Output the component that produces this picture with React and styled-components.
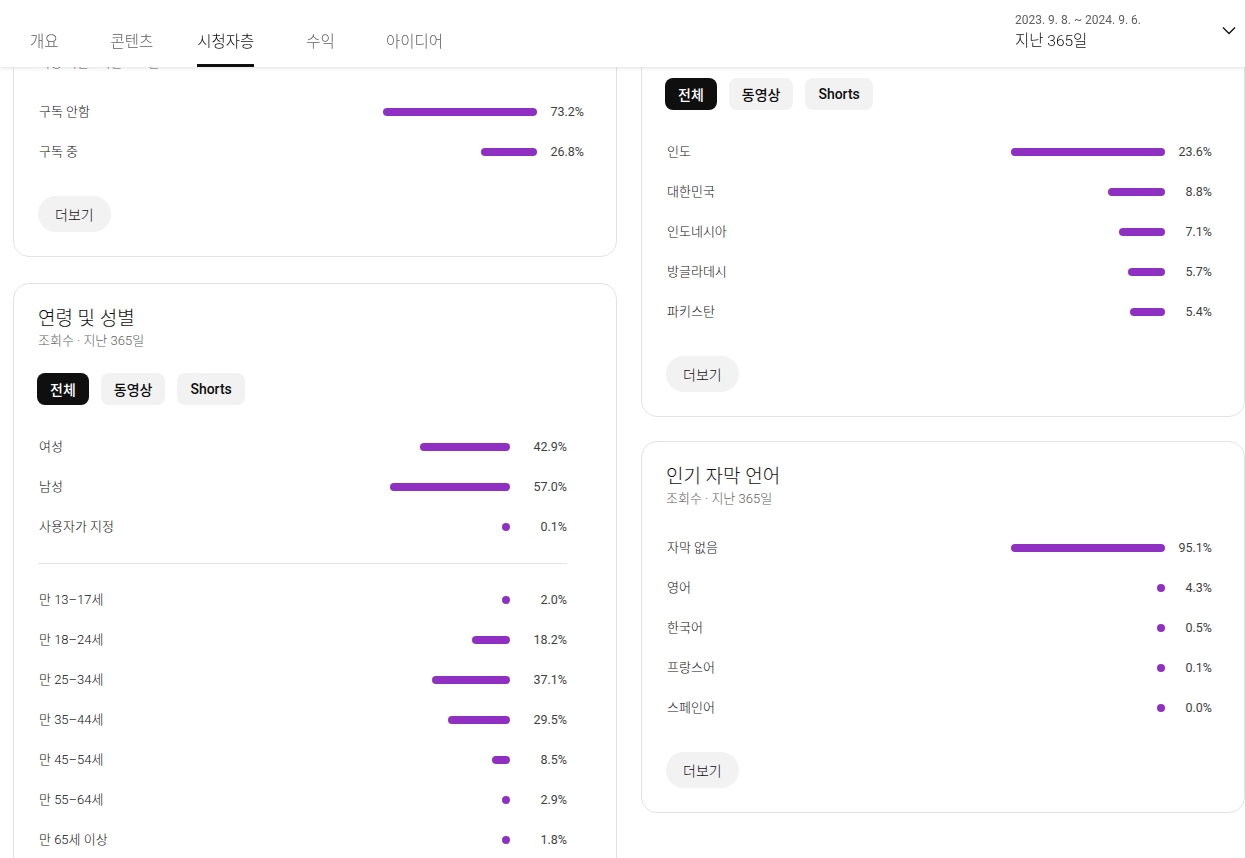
import React from "react";
import styled, { createGlobalStyle } from "styled-components";

const GlobalStyle = createGlobalStyle`
  html, body { margin: 0; padding: 0; background: #fff; overflow: hidden; }
  body { font-family: Roboto, "Noto Sans CJK KR", sans-serif; color: #0f0f0f; }
  * { box-sizing: border-box; }
`;

const Header = styled.header`
  position: fixed;
  top: 0;
  left: 0;
  right: 0;
  height: 67px;
  background: #fff;
  box-shadow: 0 1px 4px rgba(0, 0, 0, 0.12);
  display: flex;
  justify-content: space-between;
  align-items: stretch;
  z-index: 10;
`;

const Tabs = styled.nav`
  display: flex;
  align-items: stretch;
  padding-left: 30px;
`;

const Tab = styled.div`
  display: flex;
  align-items: center;
  margin-right: ${(p) => p.$space || 0}px;
  padding-top: 17px;
  font-size: 15.5px;
  font-weight: 300;
  line-height: 20px;
  color: ${(p) => (p.$active ? "#0f0f0f" : "#606060")};
  box-shadow: ${(p) => (p.$active ? "inset 0 -3px 0 #0f0f0f" : "none")};
`;

const DatePicker = styled.div`
  display: flex;
  align-items: center;
  gap: 12px;
  padding-right: 4px;
`;

const DateBlock = styled.div`
  width: 190px;
  display: flex;
  flex-direction: column;
  gap: 3px;
  margin-top: -5px;
`;

const DateRange = styled.div`
  font-size: 12px;
  line-height: 16px;
  color: #606060;
`;

const DateLabel = styled.div`
  font-size: 15.5px;
  font-weight: 300;
  line-height: 20px;
  color: #0f0f0f;
`;

const ChevronBox = styled.div`
  width: 24px;
  height: 24px;
  display: flex;
  align-items: center;
  justify-content: center;
  margin-top: -8px;
`;

const Main = styled.main`
  margin-top: -12px;
  padding-left: 13px;
  display: grid;
  grid-template-columns: 604px 604px;
  gap: 24px;
  align-items: start;
`;

const Column = styled.div`
  display: flex;
  flex-direction: column;
  gap: ${(p) => p.$gap || 24}px;
  padding-top: ${(p) => p.$offset || 0}px;
`;

const Card = styled.section`
  border: 1px solid #e3e3e3;
  border-radius: 16px;
  background: #fff;
  padding: 22px ${(p) => p.$right || 32}px 24px 24px;
`;

const Title = styled.h2`
  margin: 0;
  font-size: 19px;
  font-weight: 300;
  line-height: 26px;
  color: #0f0f0f;
`;

const Subtitle = styled.div`
  font-size: 13px;
  font-weight: 300;
  line-height: 18px;
  color: #606060;
`;

const Chips = styled.div`
  display: flex;
  gap: 12px;
  margin-top: 23px;
  margin-left: -1px;
`;

const Chip = styled.div`
  height: 32px;
  padding: 0 13px;
  border-radius: 8px;
  display: flex;
  align-items: center;
  font-size: 14px;
  font-weight: 500;
  background: ${(p) => (p.$active ? "#0f0f0f" : "#f2f2f2")};
  color: ${(p) => (p.$active ? "#fff" : "#0f0f0f")};
`;

const Rows = styled.div`
  margin-top: ${(p) => p.$top || 20}px;
  display: flex;
  flex-direction: column;
`;

const Row = styled.div`
  height: 40px;
  display: grid;
  grid-template-columns: 1fr auto ${(p) => p.$pct}px;
  align-items: center;
  padding-left: 1px;
`;

const Label = styled.div`
  font-size: 13px;
  font-weight: 300;
  line-height: 18px;
  color: #0f0f0f;
`;

const Bar = styled.div`
  height: 8px;
  border-radius: 4px;
  background: #8f30c2;
  justify-self: end;
`;

const Pct = styled.div`
  font-size: 12.5px;
  line-height: 18px;
  color: #3f3f3f;
  text-align: right;
`;

const Divider = styled.hr`
  border: none;
  border-top: 1px solid #e5e5e5;
  margin: 16px 0;
`;

const MoreButton = styled.button`
  margin-top: 24px;
  height: 36px;
  padding: 0 17px;
  border: none;
  border-radius: 18px;
  background: #f2f2f2;
  font-family: inherit;
  font-size: 14px;
  font-weight: 300;
  color: #0f0f0f;
`;

function Chevron() {
  return (
    <svg width="24" height="24" viewBox="0 0 24 24" fill="none">
      <path d="M6 9.5l6 6 6-6" stroke="#0f0f0f" strokeWidth="1.3" />
    </svg>
  );
}

function DataRows({ items, max, maxWidth = 154, pct = 47 }) {
  return items.map(([label, value]) => {
    const w = Math.max(8, Math.round((value / max) * maxWidth));
    return (
      <Row key={label} $pct={pct}>
        <Label>{label}</Label>
        <Bar style={{ width: w }} />
        <Pct>{value.toFixed(1)}%</Pct>
      </Row>
    );
  });
}

function FilterChips() {
  return (
    <Chips>
      <Chip $active>전체</Chip>
      <Chip>동영상</Chip>
      <Chip>Shorts</Chip>
    </Chips>
  );
}

export default function App() {
  return (
    <>
      <GlobalStyle />
      <Header>
        <Tabs>
          <Tab $space={52}>개요</Tab>
          <Tab $space={44}>콘텐츠</Tab>
          <Tab $active $space={52}>시청자층</Tab>
          <Tab $space={51}>수익</Tab>
          <Tab>아이디어</Tab>
        </Tabs>
        <DatePicker>
          <DateBlock>
            <DateRange>2023. 9. 8. ~ 2024. 9. 6.</DateRange>
            <DateLabel>지난 365일</DateLabel>
          </DateBlock>
          <ChevronBox>
            <Chevron />
          </ChevronBox>
        </DatePicker>
      </Header>
      <Main>
        <Column $offset={17} $gap={26}>
          <Card>
            <Title>구독 상태</Title>
            <Subtitle>시청 시간 · 지난 365일</Subtitle>
            <Rows>
              <DataRows items={[["구독 안함", 73.2], ["구독 중", 26.8]]} max={73.2} />
            </Rows>
            <MoreButton>더보기</MoreButton>
          </Card>
          <Card $right={49}>
            <Title>연령 및 성별</Title>
            <Subtitle>조회수 · 지난 365일</Subtitle>
            <FilterChips />
            <Rows $top={22}>
              <DataRows
                items={[["여성", 42.9], ["남성", 57.0], ["사용자가 지정", 0.1]]}
                max={57.0}
                maxWidth={120}
                pct={57}
              />
              <Divider />
              <DataRows
                items={[
                  ["만 13–17세", 2.0],
                  ["만 18–24세", 18.2],
                  ["만 25–34세", 37.1],
                  ["만 35–44세", 29.5],
                  ["만 45–54세", 8.5],
                  ["만 55–64세", 2.9],
                  ["만 65세 이상", 1.8],
                ]}
                max={57.0}
                maxWidth={120}
                pct={57}
              />
            </Rows>
          </Card>
        </Column>
        <Column $gap={24}>
          <Card>
            <Title>많이 시청하는 지역</Title>
            <Subtitle>조회수 · 지난 365일</Subtitle>
            <FilterChips />
            <Rows $top={22}>
              <DataRows
                items={[
                  ["인도", 23.6],
                  ["대한민국", 8.8],
                  ["인도네시아", 7.1],
                  ["방글라데시", 5.7],
                  ["파키스탄", 5.4],
                ]}
                max={23.6}
              />
            </Rows>
            <MoreButton>더보기</MoreButton>
          </Card>
          <Card>
            <Title>인기 자막 언어</Title>
            <Subtitle>조회수 · 지난 365일</Subtitle>
            <Rows>
              <DataRows
                items={[
                  ["자막 없음", 95.1],
                  ["영어", 4.3],
                  ["한국어", 0.5],
                  ["프랑스어", 0.1],
                  ["스페인어", 0.0],
                ]}
                max={95.1}
              />
            </Rows>
            <MoreButton>더보기</MoreButton>
          </Card>
        </Column>
      </Main>
    </>
  );
}
